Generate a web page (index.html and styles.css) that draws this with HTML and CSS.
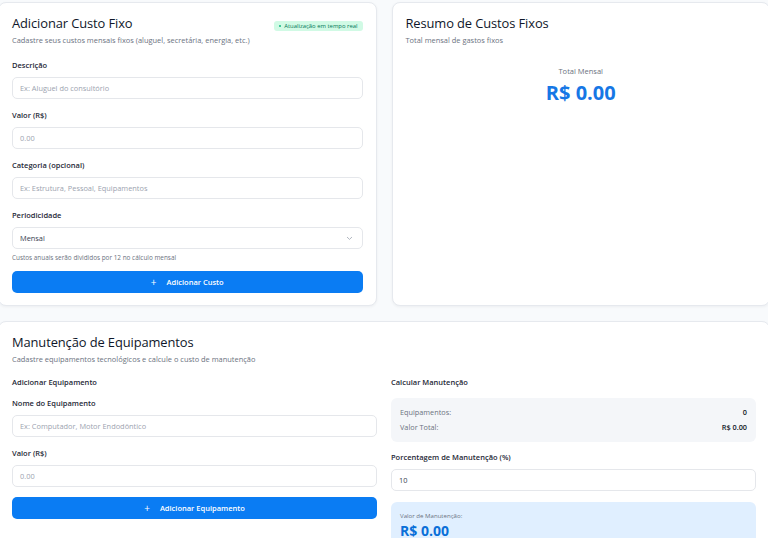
FILE: index.html
```html
<!DOCTYPE html>
<html lang="pt-BR">
<head>
<meta charset="utf-8">
<title>Custos Fixos</title>
<link rel="stylesheet" href="styles.css">
</head>
<body>
<div class="page">
  <div class="top-grid">
    <section class="card">
      <div class="card-head">
        <div>
          <h2 class="card-title">Adicionar Custo Fixo</h2>
          <p class="card-sub">Cadastre seus custos mensais fixos (aluguel, secretária, energia, etc.)</p>
        </div>
        <span class="badge"><span class="badge-dot"></span>Atualização em tempo real</span>
      </div>
      <div class="form">
        <div class="field">
          <label class="label">Descrição</label>
          <div class="input placeholder">Ex: Aluguel do consultório</div>
        </div>
        <div class="field">
          <label class="label">Valor (R$)</label>
          <div class="input placeholder">0.00</div>
        </div>
        <div class="field">
          <label class="label">Categoria (opcional)</label>
          <div class="input placeholder">Ex: Estrutura, Pessoal, Equipamentos</div>
        </div>
        <div class="field field-last">
          <label class="label">Periodicidade</label>
          <div class="input select">
            <span>Mensal</span>
            <svg class="chev" width="7" height="5" viewBox="0 0 7 5"><path d="M1.3 1.3 L3.5 3.4 L5.7 1.3" fill="none" stroke="#9ca3af" stroke-width="0.8" stroke-linecap="round" stroke-linejoin="round"/></svg>
          </div>
          <p class="helper">Custos anuais serão divididos por 12 no cálculo mensal</p>
        </div>
        <button class="btn"><span class="plus">+</span>Adicionar Custo</button>
      </div>
    </section>

    <section class="card">
      <div class="card-head">
        <div>
          <h2 class="card-title">Resumo de Custos Fixos</h2>
          <p class="card-sub">Total mensal de gastos fixos</p>
        </div>
      </div>
      <div class="summary">
        <p class="summary-label">Total Mensal</p>
        <p class="summary-value">R$ 0.00</p>
      </div>
    </section>
  </div>

  <section class="card">
    <div class="card-head">
      <div>
        <h2 class="card-title">Manutenção de Equipamentos</h2>
        <p class="card-sub">Cadastre equipamentos tecnológicos e calcule o custo de manutenção</p>
      </div>
    </div>
    <div class="two-col">
      <div class="col">
        <h3 class="subhead">Adicionar Equipamento</h3>
        <div class="field">
          <label class="label">Nome do Equipamento</label>
          <div class="input placeholder">Ex: Computador, Motor Endodôntico</div>
        </div>
        <div class="field field-tight">
          <label class="label">Valor (R$)</label>
          <div class="input placeholder">0.00</div>
        </div>
        <button class="btn"><span class="plus">+</span>Adicionar Equipamento</button>
      </div>
      <div class="col">
        <h3 class="subhead">Calcular Manutenção</h3>
        <div class="stats">
          <div class="stat-row"><span class="stat-label">Equipamentos:</span><span class="stat-value">0</span></div>
          <div class="stat-row"><span class="stat-label">Valor Total:</span><span class="stat-value">R$ 0.00</span></div>
        </div>
        <div class="field">
          <label class="label">Porcentagem de Manutenção (%)</label>
          <div class="input">10</div>
        </div>
        <div class="result">
          <p class="result-label">Valor de Manutenção:</p>
          <p class="result-value">R$ 0.00</p>
        </div>
      </div>
    </div>
  </section>
</div>
</body>
</html>
```

FILE: styles.css
```css
html, body {
  overflow: hidden;
}
body {
  margin: 0;
  background: #f8fafc;
  font-family: "Open Sans", "Noto Sans", sans-serif;
  color: #111827;
}
.page {
  width: 772px;
  margin: 2px 0 0 -2px;
  display: flex;
  flex-direction: column;
  gap: 15px;
}
.top-grid {
  display: grid;
  grid-template-columns: 1fr 1fr;
  gap: 15px;
}
.card {
  background: #fff;
  border: 1px solid #e6e9ee;
  border-radius: 8px;
  box-shadow: 0 1px 3px rgba(15, 23, 42, 0.05);
  padding: 11px 13px 12px;
}
.card-head {
  display: flex;
  justify-content: space-between;
  align-items: flex-start;
}
.card-title {
  margin: 0;
  font-size: 12.9px;
  font-weight: 500;
  line-height: 19px;
  color: #0f172a;
  letter-spacing: -0.1px;
}
.card-sub {
  margin: 2px 0 0;
  font-size: 7.45px;
  line-height: 11px;
  color: #6b7280;
}
.badge {
  margin-top: 7px;
  display: inline-flex;
  align-items: center;
  gap: 3px;
  background: #d1fae5;
  color: #047857;
  font-size: 5.9px;
  line-height: 6px;
  padding: 2px 5px;
  border-radius: 3px;
}
.badge-dot {
  width: 2.5px;
  height: 2.5px;
  border-radius: 50%;
  background: #10b981;
}
.form {
  margin-top: 14px;
}
.field {
  margin-bottom: 11px;
}
.field-last {
  margin-bottom: 8px;
}
.field-tight {
  margin-bottom: 10px;
}
.label {
  display: block;
  font-size: 7.5px;
  line-height: 11px;
  font-weight: 600;
  color: #1f2937;
  margin-bottom: 6px;
}
.input {
  box-sizing: border-box;
  height: 22px;
  border: 1px solid #e5e7eb;
  border-radius: 5px;
  background: #fff;
  padding: 0 7px;
  display: flex;
  align-items: center;
  font-size: 7.4px;
  color: #374151;
}
.placeholder {
  color: #9ca3af;
}
.select {
  justify-content: space-between;
  padding-right: 9px;
}
.chev {
  display: block;
}
.helper {
  margin: 4px 0 0;
  font-size: 6.4px;
  line-height: 10px;
  color: #6b7280;
}
.btn {
  width: 100%;
  height: 22px;
  border: 0;
  border-radius: 5px;
  background: #0a7cf3;
  color: #fff;
  font-family: inherit;
  font-size: 7.5px;
  font-weight: 600;
  display: flex;
  align-items: center;
  justify-content: center;
  gap: 10px;
  padding: 0;
}
.plus {
  font-size: 10px;
  font-weight: 400;
  line-height: 10px;
}
.summary {
  margin-top: 20px;
  text-align: center;
}
.summary-label {
  margin: 0;
  font-size: 7.5px;
  line-height: 11px;
  color: #6b7280;
}
.summary-value {
  margin: 4px 0 0;
  font-size: 20px;
  line-height: 24px;
  font-weight: 700;
  color: #1677e5;
}
.two-col {
  margin-top: 12px;
  display: grid;
  grid-template-columns: 1fr 1fr;
  gap: 14px;
}
.subhead {
  margin: 0 0 10px;
  font-size: 7.5px;
  line-height: 11px;
  font-weight: 600;
  color: #1f2937;
}
.stats {
  background: #f4f6f9;
  border-radius: 6px;
  padding: 7px 9px;
  margin-bottom: 10px;
}
.stat-row {
  display: flex;
  justify-content: space-between;
  font-size: 7.3px;
  line-height: 15px;
}
.stat-label {
  color: #6b7280;
}
.stat-value {
  color: #111827;
  font-weight: 600;
}
.result {
  background: #e0efff;
  border-radius: 6px;
  padding: 9px 9px 10px;
}
.result-label {
  margin: 0;
  font-size: 6.1px;
  line-height: 10px;
  color: #6b7280;
}
.result-value {
  margin: 1px 0 0;
  font-size: 14px;
  line-height: 18px;
  font-weight: 700;
  color: #0a6fd8;
}
```
